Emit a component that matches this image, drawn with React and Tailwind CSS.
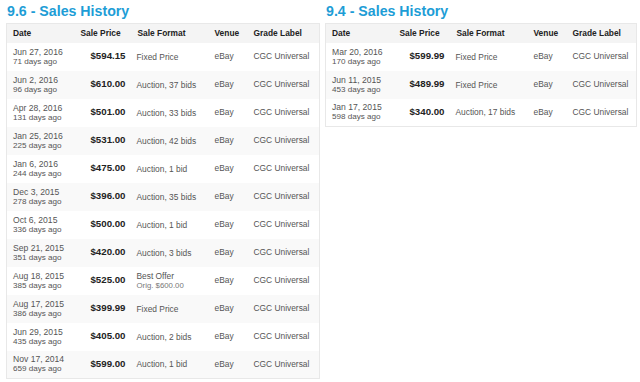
import React from "react";

const left = [
  ["Jun 27, 2016", "71 days ago", "$594.15", "Fixed Price"],
  ["Jun 2, 2016", "96 days ago", "$610.00", "Auction, 37 bids"],
  ["Apr 28, 2016", "131 days ago", "$501.00", "Auction, 33 bids"],
  ["Jan 25, 2016", "225 days ago", "$531.00", "Auction, 42 bids"],
  ["Jan 6, 2016", "244 days ago", "$475.00", "Auction, 1 bid"],
  ["Dec 3, 2015", "278 days ago", "$396.00", "Auction, 35 bids"],
  ["Oct 6, 2015", "336 days ago", "$500.00", "Auction, 1 bid"],
  ["Sep 21, 2015", "351 days ago", "$420.00", "Auction, 3 bids"],
  ["Aug 18, 2015", "385 days ago", "$525.00", "Best Offer", "Orig. $600.00"],
  ["Aug 17, 2015", "386 days ago", "$399.99", "Fixed Price"],
  ["Jun 29, 2015", "435 days ago", "$405.00", "Auction, 2 bids"],
  ["Nov 17, 2014", "659 days ago", "$599.00", "Auction, 1 bid"],
];

const right = [
  ["Mar 20, 2016", "170 days ago", "$599.99", "Fixed Price"],
  ["Jun 11, 2015", "453 days ago", "$489.99", "Fixed Price"],
  ["Jan 17, 2015", "598 days ago", "$340.00", "Auction, 17 bids"],
];

function Table({ title, rows, width }) {
  return (
    <div className={width}>
      <h2 className="text-[14.2px] leading-[19px] font-bold text-[#1d9dd6] pl-[1px] mb-[2px]">{title}</h2>
      <table className="w-full table-fixed border-collapse border border-[#e8e8e8]">
        <colgroup>
          <col className="w-[68px]" />
          <col className="w-[57px]" />
          <col className="w-[77px]" />
          <col className="w-[39px]" />
          <col />
        </colgroup>
        <thead>
          <tr className="h-[19px] bg-[#f4f4f4] text-[8.4px] font-bold text-[#222]">
            <th className="text-left pl-[6px] font-bold">Date</th>
            <th className="text-left pl-[6px] font-bold">Sale Price</th>
            <th className="text-left pl-[6px] font-bold">Sale Format</th>
            <th className="text-left pl-[6px] font-bold">Venue</th>
            <th className="text-left pl-[6px] font-bold">Grade Label</th>
          </tr>
        </thead>
        <tbody>
          {rows.map((r, i) => (
            <tr key={i} className={"h-[28px] text-[#555] " + (i % 2 === 1 ? "bg-[#f9f9f9]" : "bg-white")}>
              <td className="pl-[6px] align-middle whitespace-nowrap">
                <div className="text-[8.6px] leading-[10px]">{r[0]}</div>
                <div className="text-[8.1px] leading-[10px]">{r[1]}</div>
              </td>
              <td className="pr-[6px] text-right align-middle text-[9.7px] font-bold text-[#222]">{r[2]}</td>
              <td className="pl-[5px] align-middle whitespace-nowrap">
                <div className="text-[8.4px] leading-[10px]">{r[3]}</div>
                {r[4] && <div className="text-[7.8px] leading-[10px] text-[#777]">{r[4]}</div>}
              </td>
              <td className="pl-[6px] align-middle text-[8.4px]">eBay</td>
              <td className="pl-[6px] align-middle text-[8.4px] whitespace-nowrap">CGC Universal</td>
            </tr>
          ))}
        </tbody>
      </table>
    </div>
  );
}

export default function App() {
  return (
    <div className="w-[640px] h-[382px] bg-white overflow-hidden pl-[6px] pt-[2px] flex gap-[5px] items-start" style={{ fontFamily: '"Liberation Sans", Arial, sans-serif' }}>
      <Table title="9.6 - Sales History" rows={left} width="w-[314px]" />
      <Table title="9.4 - Sales History" rows={right} width="w-[312px]" />
    </div>
  );
}
